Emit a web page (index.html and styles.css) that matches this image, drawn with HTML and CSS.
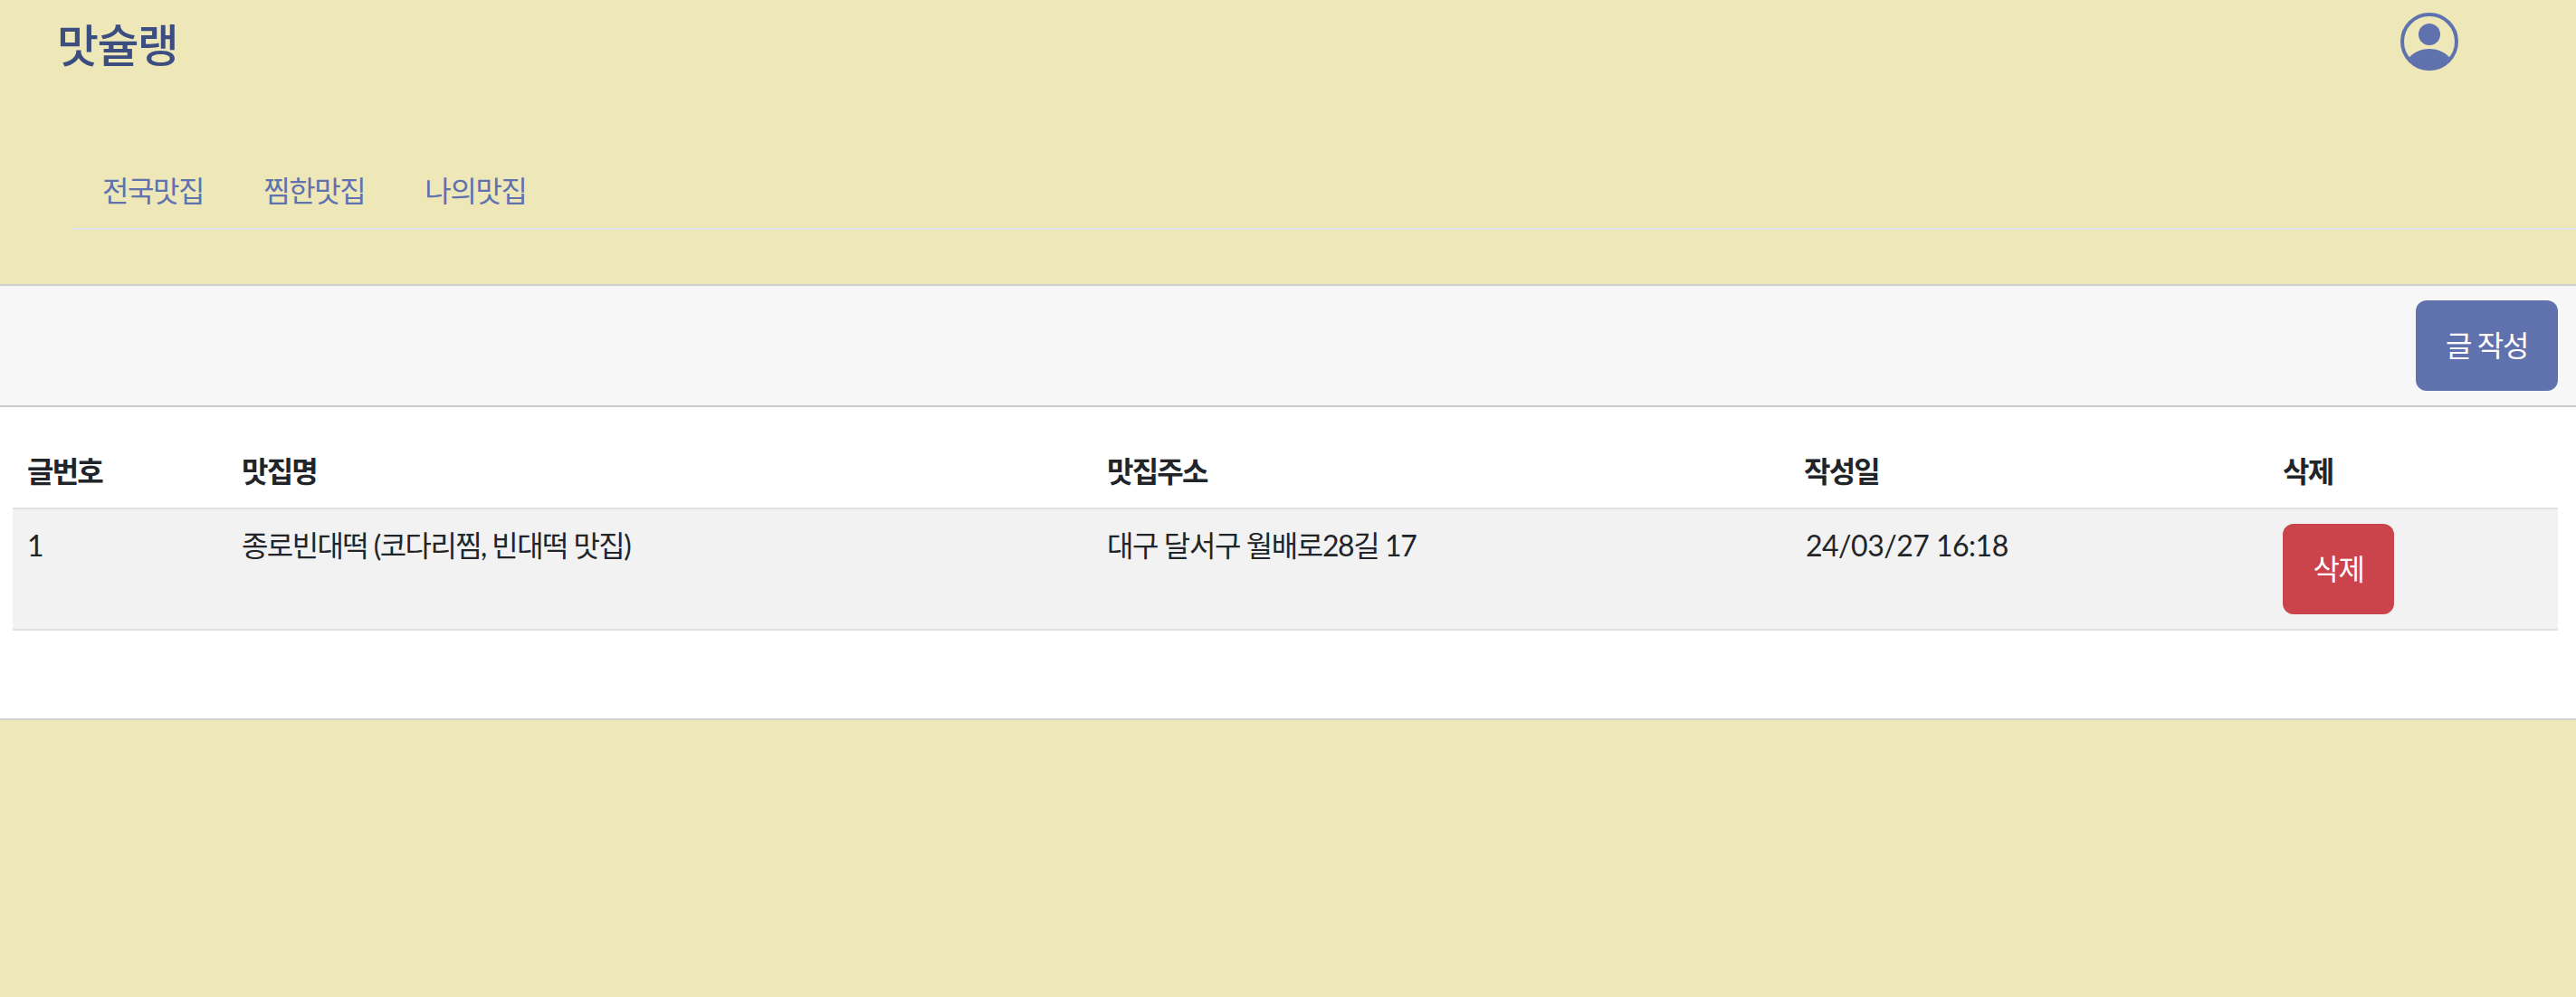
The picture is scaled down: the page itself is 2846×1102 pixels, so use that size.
FILE: index.html
```html
<!DOCTYPE html>
<html lang="ko">
<head>
<meta charset="utf-8">
<title>맛슐랭</title>
<link rel="stylesheet" href="styles.css">
</head>
<body>
<header class="site-header">
  <div class="top-row">
    <a class="brand">맛슐랭</a>
    <svg class="user-icon" viewBox="0 0 64 64" aria-hidden="true">
      <circle cx="32" cy="32" r="30" fill="none" stroke="#5f72ae" stroke-width="4"/>
      <circle cx="32" cy="24" r="12" fill="#5f72ae"/>
      <path d="M10 49 C16 43 24 40 32 40 C40 40 48 43 54 49 A30 30 0 0 1 32 64 A30 30 0 0 1 10 49 Z" fill="#5f72ae"/>
    </svg>
  </div>
  <nav class="tabs">
    <a class="tab">전국맛집</a>
    <a class="tab">찜한맛집</a>
    <a class="tab">나의맛집</a>
  </nav>
</header>
<div class="toolbar">
  <button class="btn btn-primary">글 작성</button>
</div>
<main class="content">
  <table class="list">
    <colgroup>
      <col class="col-no"><col class="col-name"><col class="col-addr"><col class="col-date"><col class="col-del">
    </colgroup>
    <thead>
      <tr><th>글번호</th><th>맛집명</th><th>맛집주소</th><th>작성일</th><th>삭제</th></tr>
    </thead>
    <tbody>
      <tr>
        <td>1</td>
        <td class="name">종로빈대떡 (코다리찜, 빈대떡 맛집)</td>
        <td>대구 달서구 월배로28길 17</td>
        <td class="date">24/03/27 16:18</td>
        <td><button class="btn btn-danger">삭제</button></td>
      </tr>
    </tbody>
  </table>
</main>
</body>
</html>
```
FILE: styles.css
```css
* { box-sizing: border-box; }
html, body { margin: 0; height: 100%; }
body {
  background: #eee8b9;
  color: #212529;
  font-family: "Lato", "Noto Sans CJK KR", sans-serif;
  font-size: 32px;
  line-height: 48px;
  letter-spacing: -1.4px;
}
.site-header {
  height: 316px;
  border-bottom: 2px solid #cfcfcf;
}
.top-row {
  display: flex;
  justify-content: space-between;
  align-items: flex-start;
  height: 152px;
  padding: 14px 130px 0 64px;
}
.brand {
  color: #3c4d7f;
  font-size: 50px;
  font-weight: 500;
  line-height: 70px;
  letter-spacing: -1.6px;
  margin: 1px 0 0 -1px;
}
.user-icon { width: 64px; height: 64px; display: block; }
.tabs {
  display: flex;
  gap: 66px;
  height: 102px;
  margin-left: 80px;
  padding: 35px 0 0 33px;
  border-bottom: 2px solid #e2e3e6;
}
.tab { color: #5f72ae; }
.toolbar {
  display: flex;
  justify-content: flex-end;
  height: 134px;
  padding: 16px 20px 0 0;
  background: #f7f7f7;
  border-bottom: 2px solid #cccccc;
}
.btn {
  height: 100px;
  border: 0;
  border-radius: 12px;
  color: #fff;
  font: inherit;
  letter-spacing: inherit;
  padding: 0;
  white-space: nowrap;
}
.btn-primary { background: #5f72ae; width: 157px; }
.btn-danger { background: #cb444c; width: 123px; display: block; }
.content {
  height: 346px;
  background: #fff;
  padding: 30px 20px 0 14px;
  border-bottom: 2px solid #cfcfcf;
}
.list {
  width: 100%;
  table-layout: fixed;
  border-collapse: collapse;
}
.col-no { width: 237px; }
.col-name { width: 956px; }
.col-addr { width: 770px; }
.col-date { width: 529px; }
.col-del { width: 320px; }
.list th {
  text-align: left;
  font-weight: 700;
  height: 82px;
  padding: 8px 16px;
  letter-spacing: -1.8px;
  border-bottom: 2px solid #dee2e6;
}
.list td {
  vertical-align: top;
  padding: 16px;
  background: #f2f2f2;
  border-bottom: 2px solid #dee2e6;
}
.list .name { letter-spacing: -1.6px; }
.list .date { letter-spacing: -0.5px; padding-left: 18px; }
```
